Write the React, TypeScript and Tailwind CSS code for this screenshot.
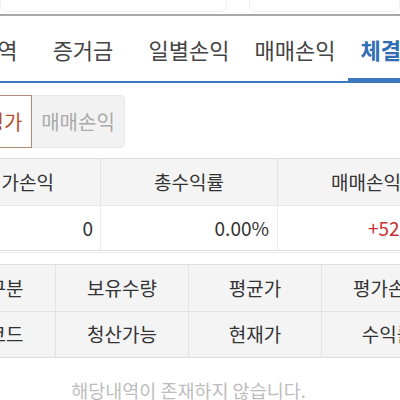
const font = { fontFamily: '"Noto Sans CJK KR", "Noto Sans", sans-serif' };

const tabs = ['잔고내역', '증거금', '일별손익', '매매손익', '체결내역'];

const summaryHeads = ['평가손익', '총수익률', '매매손익'];
const summaryValues = ['0', '0.00%', '+52,000'];

const detailRows = [
  ['매매구분', '보유수량', '평균가', '평가손익'],
  ['종목코드', '청산가능', '현재가', '수익률'],
];

export default function App() {
  return (
    <div className="relative h-[400px] w-[400px] overflow-hidden bg-white" style={font}>
      {/* top inputs, cut off by the viewport */}
      <div className="flex h-[14px] gap-[22px]">
        <div className="-mt-[10px] h-[22px] w-[240px] rounded-b-[6px] border border-[#f0f0f0]" />
        <div className="-mt-[10px] h-[22px] w-[160px] rounded-b-[6px] border border-[#f0f0f0]" />
      </div>
      <div className="h-[2px] bg-[#a9a9a9]" />

      {/* tab strip */}
      <div className="relative h-[67px] border-b-2 border-[#3b78c0]">
        <div className="-ml-[76px] flex h-full">
          {tabs.map((tab, i) => {
            const active = i === tabs.length - 1;
            return (
              <div
                key={tab}
                className={
                  active
                    ? 'relative flex w-[106px] shrink-0 items-center justify-center pt-[1px] text-[22px] font-bold text-[#2f6db4]'
                    : 'flex w-[106px] shrink-0 items-center justify-center pt-[1px] text-[22px] text-[#444]'
                }
              >
                {tab}
                {active && <div className="absolute -bottom-[2px] left-0 h-[5px] w-full bg-[#3b78c0]" />}
              </div>
            );
          })}
        </div>
      </div>

      {/* segment buttons */}
      <div className="-ml-[61px] mt-[12px] flex h-[53px]">
        <div className="flex w-[93px] items-center justify-center border border-[#b08a74] bg-white text-[20px] text-[#b5522c]">
          잔고평가
        </div>
        <div className="flex w-[93px] items-center justify-center rounded-r-[5px] border border-l-0 border-[#e8e8e8] bg-[#f2f2f2] text-[20px] text-[#ababab]">
          매매손익
        </div>
      </div>

      {/* summary table */}
      <div className="-ml-[62px] mt-[10px] w-[600px] border-y border-[#dedede] text-[19px] text-[#333]">
        <div className="grid h-[46px] grid-cols-[162px_177px_177px] bg-[#f4f4f4]">
          {summaryHeads.map((h, i) => (
            <div
              key={h}
              className={i > 0 ? 'flex items-center justify-center border-l border-[#e2e2e2]' : 'flex items-center justify-center'}
            >
              {h}
            </div>
          ))}
        </div>
        <div className="grid h-[45px] grid-cols-[162px_177px_177px] border-t border-[#e6e6e6]">
          {summaryValues.map((v, i) => (
            <div
              key={v}
              className={
                i === 0
                  ? 'flex items-center justify-end pr-[7px]'
                  : i === 1
                    ? 'flex items-center justify-end border-l border-[#ececec] pr-[8px]'
                    : 'flex items-center justify-start border-l border-[#ececec] pl-[90px] text-[#c62f2f]'
              }
            >
              {v}
            </div>
          ))}
        </div>
      </div>
      <div className="mt-[1px] h-[1px] bg-[#ececec]" />

      {/* detail header */}
      <div className="-ml-[78px] mt-[11px] w-[560px] border-y border-[#dedede] bg-[#f4f4f4] text-[19px] text-[#333]">
        {detailRows.map((row, r) => (
          <div
            key={r}
            className={r > 0 ? 'grid h-[46px] grid-cols-[133px_133px_133px_133px] border-t border-[#e2e2e2]' : 'grid h-[46px] grid-cols-[133px_133px_133px_133px]'}
          >
            {row.map((cell, i) => (
              <div
                key={cell}
                className={i > 0 ? 'flex items-center justify-center border-l border-[#e2e2e2]' : 'flex items-center justify-center'}
              >
                {cell}
              </div>
            ))}
          </div>
        ))}
      </div>

      <div className="mt-[19px] w-[377px] text-center text-[18.5px] text-[#bdbdbd]">해당내역이 존재하지 않습니다.</div>
    </div>
  );
}
